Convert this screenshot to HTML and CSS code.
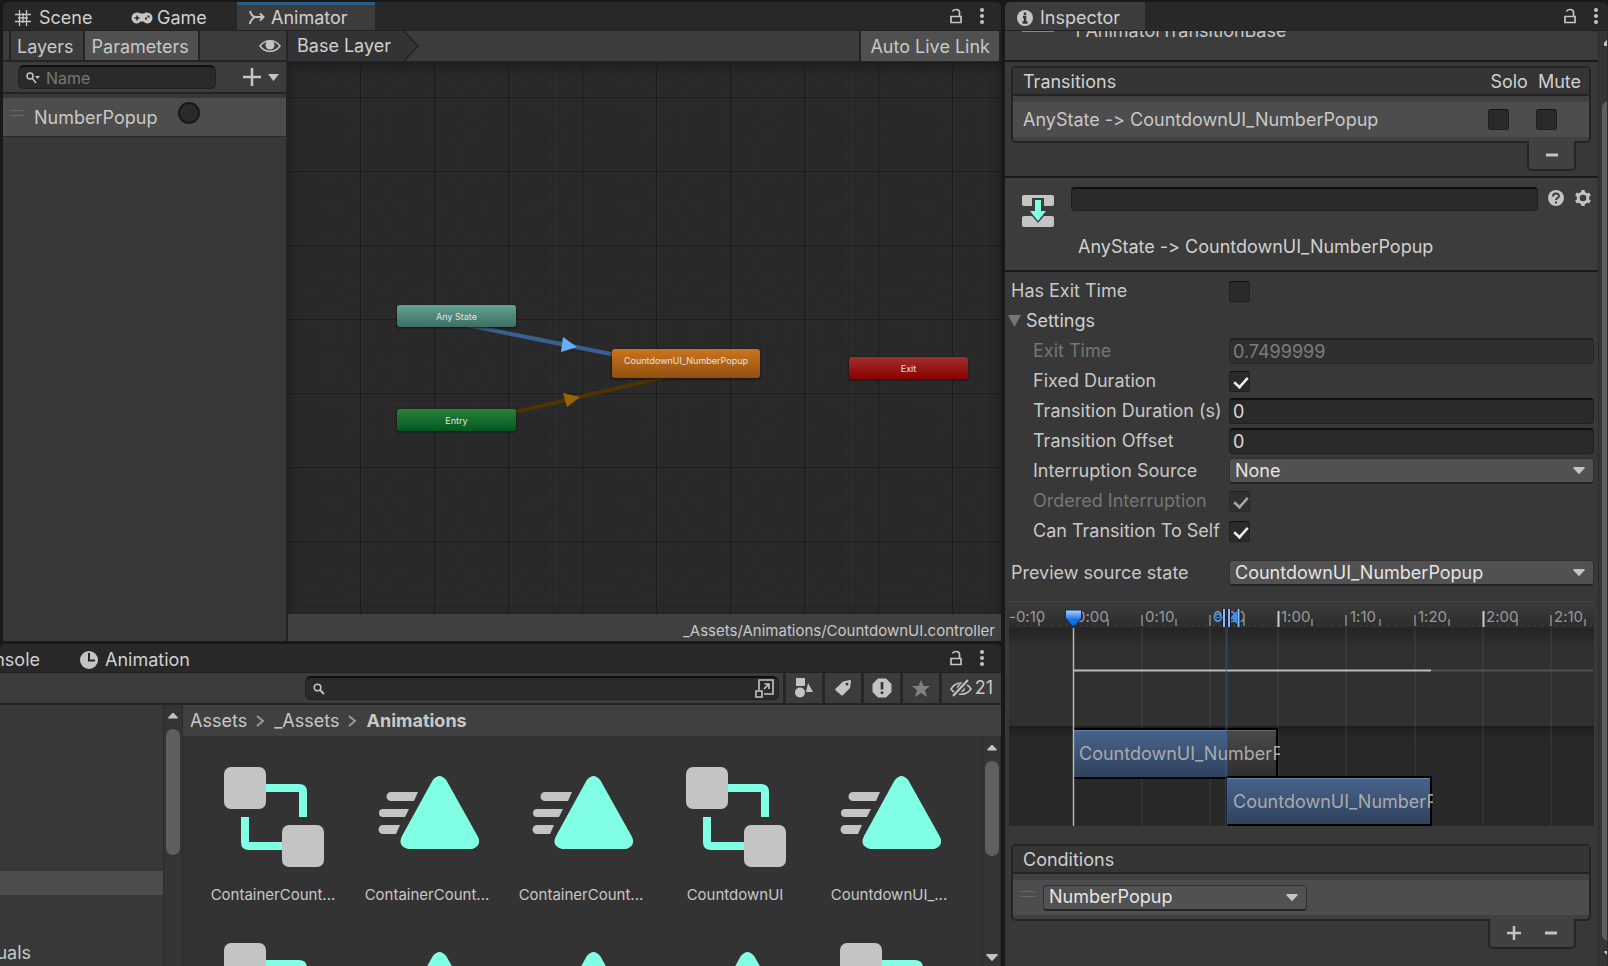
FILE: index.html
```html
<!DOCTYPE html>
<html lang="en">
<head>
<meta charset="utf-8">
<title>Animator</title>
<link rel="stylesheet" href="styles.css">
</head>
<body>
<svg class="defs" aria-hidden="true">
  <symbol id="lock" viewBox="0 0 14 16"><path d="M2 8.500h10v6H2zM3.500 3.500C4.500 1 10 .5 10.500 4v4.500" fill="none" stroke="currentColor" stroke-width="1.700"/></symbol>
  <symbol id="dots" viewBox="0 0 6 16"><circle cx="3" cy="2" r="2"/><circle cx="3" cy="8" r="2"/><circle cx="3" cy="14" r="2"/></symbol>
  <symbol id="caret" viewBox="0 0 12 7"><path d="M1 0h10a.8.8 0 0 1 .6 1.300L6.500 6.700a.7.7 0 0 1-1 0L.4 1.300A.8.8 0 0 1 1 0z"/></symbol>
  <symbol id="controller" viewBox="0 0 102 102"><path d="M42 21h33q4 0 4 4v25M21 50v25q0 4 4 4h33" fill="none" stroke="#80ffe4" stroke-width="8"/><rect width="42" height="42" rx="7"/><rect x="58" y="58" width="42" height="42" rx="7"/></symbol>
  <symbol id="clip" viewBox="0 0 102 102"><path d="M13 25h27l-4 9H13a4.500 4.500 0 0 1 0-9zM5 42h26l-4 8H5a4 4 0 0 1 0-8zM5 58h17l-4 9H5a4.500 4.500 0 0 1 0-9z"/><path d="M54.500 13.500q7-9 14 0L99.500 69q5 9-5 13H30q-11-3-6-13z" fill="#80ffe4"/></symbol>
</svg>
<div class="editor">
  <main class="left">
    <section class="animator panel">
      <nav class="tabs">
        <button class="tab scene"><svg width="16" height="16" viewBox="0 0 16 16"><path d="M4.500 0v16M11.500 0v16M0 4.500h16M0 11.500h16M8 3v10M3 8h10" fill="none" stroke="currentColor" stroke-width="1.300"/></svg>Scene</button>
        <button class="tab game"><svg width="22" height="12" viewBox="0 0 22 12"><path d="M6 .5q2 0 3 1h4q1-1 3-1a5.500 5.500 0 0 1 0 11q-2 0-3.500-2h-3Q8 11.500 6 11.500a5.500 5.500 0 0 1 0-11z"/><path d="M6 3.500v5M3.500 6h5" stroke="#282828" stroke-width="1.500"/><path d="M14 5.500h2v2h-2zM16.500 3.500h2v2h-2z" fill="#282828"/></svg>Game</button>
        <button class="tab animator-tab active"><svg width="16" height="16" viewBox="0 0 16 16"><path d="M1 1c1 4 3 6 6 6h7M1 14c0-3 2-5 5-7M11 3.500 14.500 7 11 10.500" fill="none" stroke="currentColor" stroke-width="2"/></svg>Animator</button>
        <span class="tab-tools"><button aria-label="Lock"><svg width="14" height="16"><use href="#lock"/></svg></button><button aria-label="Menu"><svg width="6" height="16"><use href="#dots"/></svg></button></span>
      </nav>
      <div class="animator-body">
        <aside class="params">
          <div class="param-tabs"><button>Layers</button><button class="on">Parameters</button><button class="eye" aria-label="Toggle panel"><svg width="22" height="14" viewBox="0 0 22 14"><path d="M1 7c5-7 15-7 20 0-5 7-15 7-20 0z" fill="none" stroke="currentColor" stroke-width="1.500"/><circle cx="11" cy="6" r="4.500"/></svg></button></div>
          <div class="param-search">
            <label class="search-box"><svg width="14" height="12" viewBox="0 0 14 12"><circle cx="4" cy="4" r="3" fill="none" stroke="currentColor" stroke-width="1.500"/><path d="m6 6 4 5" stroke="currentColor" stroke-width="1.500"/><path d="M9 4h5l-2.500 3z"/></svg><input type="search" placeholder="Name" aria-label="Search parameters"></label>
            <button class="add" aria-label="Add parameter"><svg width="36" height="18" viewBox="0 0 36 18"><path d="M9 0v18M0 9h18" stroke="currentColor" stroke-width="2.500"/><path d="M25 6h11l-5.500 7z"/></svg></button>
          </div>
          <div class="param-row"><i class="grip"></i><label for="trigger">NumberPopup</label><input id="trigger" type="radio"></div>
        </aside>
        <div class="graph">
          <div class="crumbs"><button class="layer">Base Layer<svg width="17" height="30" viewBox="0 0 17 30"><path d="M0 0h1l14 15L1 30H0z" fill="#333"/><path d="M1 0 15 15 1 30" fill="none" stroke="#222" stroke-width="1.500"/></svg></button><button class="live">Auto Live Link</button></div>
          <div class="canvas">
            <svg class="links">
              <defs><pattern id="grid" x="72" y="35" width="74" height="74" patternUnits="userSpaceOnUse"><path d="M7.400 0v74M14.800 0v74M22.200 0v74M29.600 0v74M37 0v74M44.400 0v74M51.800 0v74M59.200 0v74M66.600 0v74M0 7.400h74M0 14.800h74M0 22.200h74M0 29.600h74M0 37h74M0 44.400h74M0 51.800h74M0 59.200h74M0 66.600h74" stroke="#262626"/><path d="M.5 0v74M0 .5h74" stroke="#1d1d1d"/></pattern></defs>
              <rect width="100%" height="100%" fill="url(#grid)"/>
              <path d="M168 261 398 307" stroke="#3a608e" stroke-width="4"/><path d="M168 364 398 310" stroke="#4f3300" stroke-width="4"/>
              <path d="m275 275 14 10-16 5z" fill="#65afff"/><path d="m275 331 17 4-13 10z" fill="#9b6400"/>
            </svg>
            <div class="node any">Any State</div><div class="node state">CountdownUI_NumberPopup</div><div class="node entry">Entry</div><div class="node exit">Exit</div>
          </div>
          <footer class="path">_Assets/Animations/CountdownUI.controller</footer>
        </div>
      </div>
    </section>
    <section class="project panel">
      <nav class="tabs">
        <button class="tab console">Console</button>
        <button class="tab animation"><svg width="18" height="18" viewBox="0 0 18 18"><circle cx="9" cy="9" r="9"/><path d="M9 2v7.500h6" fill="none" stroke="#282828" stroke-width="2"/></svg>Animation</button>
        <span class="tab-tools"><button aria-label="Lock"><svg width="14" height="16"><use href="#lock"/></svg></button><button aria-label="Menu"><svg width="6" height="16"><use href="#dots"/></svg></button></span>
      </nav>
      <div class="project-tools">
        <label class="search-box"><svg width="12" height="12" viewBox="0 0 12 12"><circle cx="4.500" cy="4.500" r="3.300" fill="none" stroke="currentColor" stroke-width="1.600"/><path d="m7 7 4 4" stroke="currentColor" stroke-width="2"/></svg><input type="search" aria-label="Search assets"><svg class="expand" width="20" height="20" viewBox="0 0 20 20"><path d="M4 11V1h14v14h-9M1 12h6v6H1zM9 10l5-5M9.500 5H14v5" fill="none" stroke="currentColor" stroke-width="1.600"/></svg></label>
        <button aria-label="Search by type"><svg width="18" height="20" viewBox="0 0 18 20"><path d="M1 0h9v8H1zM13 5l5 9h-7z"/><circle cx="5" cy="14.500" r="5"/></svg></button>
        <button aria-label="Search by label"><svg width="16" height="16" viewBox="0 0 16 16"><path d="M8 1.500 15 0q1 0 1 1l-1 7-7 7q-1 1-2 0L.7 10.500q-1-1 0-2z"/><circle cx="12" cy="4" r="1.500" fill="#3c3c3c"/></svg></button>
        <button aria-label="Search by import log"><svg width="20" height="20" viewBox="0 0 20 20"><path d="M6 .5h8L19.500 6v8L14 19.500H6L.5 14V6z"/><path d="M10 4v7.500M10 13.500v2.500" stroke="#333" stroke-width="2.600"/></svg></button>
        <button class="star" aria-label="Favorites"><svg width="18" height="17" viewBox="0 0 18 17"><path d="m9 0 2.500 6H18l-5 4 2 7-6-4-6 4 2-7-5-4h6.500z"/></svg></button>
        <button class="hidden-count"><svg width="22" height="18" viewBox="0 0 22 18"><path d="M1 10c5-8 15-8 20 0-5 7-15 7-20 0z" fill="none" stroke="currentColor" stroke-width="1.600"/><circle cx="11" cy="9" r="4"/><path d="M4 17 18 1" stroke="#3c3c3c" stroke-width="5"/><path d="M3 17 18 1" stroke="currentColor" stroke-width="2"/></svg>21</button>
      </div>
      <div class="project-body">
        <aside class="tree"><div class="tree-selected"></div><div class="tree-item">Visuals</div></aside>
        <div class="scroll tree-scroll"><svg width="10" height="7"><use class="up" href="#caret"/></svg><i></i></div>
        <div class="browser">
          <nav class="breadcrumb"><a href="#">Assets</a><svg width="9" height="12" viewBox="0 0 9 12"><path d="m1 1 6 5-6 5" fill="none" stroke="#999" stroke-width="2"/></svg><a href="#">_Assets</a><svg width="9" height="12" viewBox="0 0 9 12"><path d="m1 1 6 5-6 5" fill="none" stroke="#999" stroke-width="2"/></svg><a href="#"><b>Animations</b></a></nav>
          <div class="asset-area">
            <div class="assets">
              <figure><svg><use href="#controller"/></svg><figcaption>ContainerCount...</figcaption></figure>
              <figure><svg><use href="#clip"/></svg><figcaption>ContainerCount...</figcaption></figure>
              <figure><svg><use href="#clip"/></svg><figcaption>ContainerCount...</figcaption></figure>
              <figure><svg><use href="#controller"/></svg><figcaption>CountdownUI</figcaption></figure>
              <figure><svg><use href="#clip"/></svg><figcaption>CountdownUI_...</figcaption></figure>
              <figure><svg><use href="#controller"/></svg></figure>
              <figure><svg><use href="#clip"/></svg></figure>
              <figure><svg><use href="#clip"/></svg></figure>
              <figure><svg><use href="#clip"/></svg></figure>
              <figure><svg><use href="#controller"/></svg></figure>
            </div>
            <div class="scroll asset-scroll"><svg width="10" height="7"><use class="up" href="#caret"/></svg><i></i><svg class="down" width="12" height="7"><use href="#caret"/></svg></div>
          </div>
        </div>
      </div>
    </section>
  </main>
  <aside class="inspector panel">
    <nav class="tabs">
      <button class="tab inspector-tab active"><svg width="16" height="16" viewBox="0 0 16 16"><circle cx="8" cy="8" r="8"/><path d="M8 2.500v2.500M6 7h2v5.500M5.500 12.500h5" fill="none" stroke="#333" stroke-width="2.400"/></svg>Inspector</button>
      <span class="tab-tools"><button aria-label="Lock"><svg width="14" height="16"><use href="#lock"/></svg></button><button aria-label="Menu"><svg width="6" height="16"><use href="#dots"/></svg></button></span>
    </nav>
    <div class="inspector-body">
      <div class="details">
        <div class="summary"><i></i><span>1 AnimatorTransitionBase</span></div>
        <section class="list-wrap">
          <div class="list"><header><span>Transitions</span><span class="solo">Solo</span><span class="mute">Mute</span></header>
            <div class="row"><span>AnyState -&gt; CountdownUI_NumberPopup</span><input class="solo-check" type="checkbox" aria-label="Solo"><input class="mute-check" type="checkbox" aria-label="Mute"></div></div>
          <div class="list-foot one"><button aria-label="Remove transition"><svg width="14" height="14"><path d="M1 7h12" stroke="currentColor" stroke-width="3"/></svg></button></div>
        </section>
        <section class="title">
          <svg width="32" height="32" viewBox="0 0 32 32"><rect width="32" height="11" rx="2"/><rect y="21" width="32" height="11" rx="2"/><path d="M10 3h12v12h5L16 28 5 15h5z" fill="#3c3c3c"/><path d="M13 5h6v11h5l-8 10-8-10h5z" fill="#80ffe4"/></svg>
          <input type="text" aria-label="Transition name">
          <span class="help"><svg width="16" height="16" viewBox="0 0 16 16"><circle cx="8" cy="8" r="8"/><path d="M5 6.500c0-4 6-4 6-.5 0 2-3 2-3 4M8 11.500v2" fill="none" stroke="#3c3c3c" stroke-width="2"/></svg><svg width="16" height="16" viewBox="0 0 16 16"><circle cx="8" cy="8" r="4.800" fill="none" stroke="currentColor" stroke-width="3"/><path d="M8 0v3M8 13v3M1 4l2.700 1.500M12.300 10.500 15 12M1 12l2.700-1.500M12.300 5.500 15 4" stroke="currentColor" stroke-width="3.500"/></svg></span>
          <h1>AnyState -&gt; CountdownUI_NumberPopup</h1>
        </section>
        <form class="fields">
          <div class="field"><label for="exit">Has Exit Time</label><input id="exit" type="checkbox"></div>
          <div class="field settings"><svg width="13" height="12"><path d="M0 0h13L6.500 12z" fill="#757575"/></svg><span>Settings</span></div>
          <div class="field sub off"><label for="time">Exit Time</label><input id="time" type="text" value="0.7499999" disabled></div>
          <div class="field sub"><label for="fixed">Fixed Duration</label><input id="fixed" type="checkbox" checked></div>
          <div class="field sub"><label for="duration">Transition Duration (s)</label><input id="duration" type="text" value="0"></div>
          <div class="field sub"><label for="offset">Transition Offset</label><input id="offset" type="text" value="0"></div>
          <div class="field sub"><label for="source">Interruption Source</label><span class="select"><select id="source"><option>None</option></select><svg width="12" height="7"><use href="#caret"/></svg></span></div>
          <div class="field sub off"><label for="ordered">Ordered Interruption</label><input id="ordered" type="checkbox" checked disabled></div>
          <div class="field sub"><label for="self">Can Transition To Self</label><input id="self" type="checkbox" checked></div>
          <div class="field preview"><label for="preview">Preview source state</label><span class="select"><select id="preview"><option>CountdownUI_NumberPopup</option></select><svg width="12" height="7"><use href="#caret"/></svg></span></div>
        </form>
        <svg class="timeline" height="225">
          <defs>
            <linearGradient id="ruler" x2="0" y2="1"><stop stop-color="#3d3d3d"/><stop offset="1" stop-color="#2b2b2b"/></linearGradient>
            <linearGradient id="shade" x2="0" y2="1"><stop stop-color="#242424"/><stop offset="1" stop-color="#303030"/></linearGradient>
            <linearGradient id="shade2" x2="0" y2="1"><stop stop-color="#1d1d1d"/><stop offset="1" stop-color="#282828"/></linearGradient>
            <linearGradient id="blue" x2="0" y2="1"><stop stop-color="#48648d"/><stop offset="1" stop-color="#2f425d"/></linearGradient>
            <linearGradient id="gray" x2="0" y2="1"><stop stop-color="#4a4a4a"/><stop offset="1" stop-color="#2d2d2d"/></linearGradient>
            <linearGradient id="pin" x2="0" y2="1"><stop stop-color="#b5d5f8"/><stop offset=".6" stop-color="#1473e8"/><stop offset="1" stop-color="#0766dc"/></linearGradient>
            <clipPath id="c1"><path d="M64 128h207v50H64z"/></clipPath><clipPath id="c2"><path d="M218 176h206v49H218z"/></clipPath>
          </defs>
          <rect width="100%" height="27" fill="url(#ruler)"/><rect y="27" width="100%" height="98" fill="#303030"/><rect y="27" width="100%" height="20" fill="url(#shade)"/>
          <rect y="125" width="100%" height="100" fill="#282828"/><rect y="125" width="100%" height="12" fill="url(#shade2)"/><path d="M0 .5h584" stroke="#454545"/>
          <path d="M133 27v198M201 27v198M269 27v198M337 27v198M406 27v198M474 27v198M542 27v198" stroke="#fff" stroke-opacity=".1" stroke-width="1"/>
          <path d="M8 24.500h576" stroke="#555" stroke-dasharray="1 6"/>
          <path d="M133 14v11M201 14v11M337 14v11M406 14v11M542 14v11M30 18v7M99 18v7M167 18v7M235 18v7M303 18v7M371 18v7M440 18v7M508 18v7M576 18v7" stroke="#8a8a8a" stroke-width="1.500"/><path d="M269.500 10v16M474.500 10v16" stroke="#ccc" stroke-width="2"/>
          <g class="times"><text x="0" y="21">-0:10</text><text x="67" y="21">0:00</text><text x="136" y="21">0:10</text><text x="204" y="21">0:20</text><text x="272" y="21">1:00</text><text x="341" y="21">1:10</text><text x="409" y="21">1:20</text><text x="477" y="21">2:00</text><text x="545" y="21">2:10</text></g>
          <path d="M65 69.500h357" stroke="#bbb" stroke-width="2"/><path d="M422 69.500h162" stroke="#505050" stroke-width="2"/>
          <rect x="64" y="127" width="205" height="51" fill="#000"/><rect x="65" y="129" width="153" height="47" fill="url(#blue)"/><rect x="218" y="129" width="49" height="47" fill="url(#gray)"/>
          <rect x="217" y="175" width="206" height="50" fill="#000"/><rect x="218" y="177" width="203" height="46" fill="url(#blue)"/>
          <path d="M65 129.500h153M218 177.500h203" stroke="#6580a5"/><path d="M218 129.500h49" stroke="#686868"/>
          <path d="M217.500 26v199" stroke="#3b5f9b" stroke-opacity=".4" stroke-width="2.500"/><path d="M64.500 27v198" stroke="#b5b5b5" stroke-width="1.500"/>
          <g class="clip-names"><text x="70" y="159" clip-path="url(#c1)">CountdownUI_NumberPopup</text><text x="224" y="207" clip-path="url(#c2)">CountdownUI_NumberPopup</text></g>
          <path d="M56.500 9h16v8L66 25h-3l-6.500-8z" fill="url(#pin)" stroke="#102b50"/>
          <path d="M215 8v18M220 8v18M229.500 8v18" stroke="#0b1830" stroke-width="4"/><path d="M215 8v18M220 8v18M229.500 8v18" stroke="#8cbcf8" stroke-width="2"/><path d="M228 10v13l-6-6.500z" fill="#398ff5"/><path d="m205 16.500 4-4 4 4-4 4zM207 16.500h4" fill="#101820" stroke="#398ff5" stroke-width="1.500"/>
        </svg>
        <section class="list-wrap conditions">
          <div class="list"><header><span>Conditions</span></header><div class="row"><i class="grip"></i><span class="select"><select aria-label="Condition parameter"><option>NumberPopup</option></select><svg width="12" height="7"><use href="#caret"/></svg></span></div></div>
          <div class="list-foot"><button aria-label="Add condition"><svg width="14" height="14"><path d="M0 7h14M7 0v14" stroke="currentColor" stroke-width="2.500"/></svg></button><button aria-label="Remove condition"><svg width="14" height="14"><path d="M1 7h12" stroke="currentColor" stroke-width="3"/></svg></button></div>
        </section>
      </div>
      <div class="scroll inspector-scroll"><svg width="12" height="7"><use class="up" href="#caret"/></svg><i></i><svg class="down" width="12" height="7"><use href="#caret"/></svg></div>
    </div>
  </aside>
</div>
</body>
</html>
```
FILE: styles.css
```css
* { box-sizing: border-box; }
body { margin: 0; background: #191919; color: #c8c8c8; font: 18px/22px Inter, sans-serif; font-variant-ligatures: none; overflow: hidden; }
button, input, select { font: inherit; font-variant-ligatures: none; color: inherit; border: 0; padding: 0; margin: 0; background: none; outline: 0; }
svg { display: block; flex: none; fill: currentColor; color: #c4c4c4; }
figure, h1 { margin: 0; }
.defs { position: absolute; width: 0; height: 0; }
a { color: inherit; text-decoration: none; }
.up { transform: rotate(180deg); transform-origin: 5px 3px; }

.editor { display: grid; grid-template-columns: minmax(0, 1003fr) minmax(0, 603fr); grid-template-rows: minmax(0, 1fr); gap: 2px; height: 100vh; padding-top: 2px; }
.left { display: grid; grid-template-rows: minmax(0, 639fr) minmax(0, 322fr); gap: 3px; min-width: 0; min-height: 0; }
.panel { display: flex; flex-direction: column; min-width: 0; min-height: 0; overflow: hidden; }
.tabs { display: flex; flex: none; height: 29px; background: #282828; border-bottom: 1px solid #222; border-radius: 5px 5px 0 0; overflow: hidden; }
.tab { display: flex; align-items: center; gap: 8px; height: 29px; padding: 2px 12px 0; white-space: nowrap; color: #d0d0d0; }
.tab.active { background: #3c3c3c; }
.scene { width: 116px; }
.game { width: 118px; gap: 4px; }
.animator-tab { width: 138px; border-top: 3px solid #2c5d87; padding-top: 0; gap: 6px; }
.tab-tools { display: flex; align-items: center; gap: 16px; margin-left: auto; padding-right: 16px; }
.tab-tools button { display: block; }

.animator { margin-left: 3px; }
.animator .tabs, .project .tabs { margin-right: 2px; }
.animator-body { display: flex; flex: 1; min-height: 0; }
.params { flex: none; width: 285px; background: #383838; border-right: 2px solid #242424; }
.param-tabs { display: flex; height: 31px; background: #3c3c3c; border-bottom: 2px solid #242424; padding-left: 6px; }
.param-tabs button { border: solid #242424; border-width: 0 0 0 2px; padding: 2px 9px 0 6px; }
.param-tabs .on { background: #505050; border-width: 0 2px; padding: 2px 9px 0 7px; }
.param-tabs .eye { border: 0; margin-left: auto; padding: 0; }
.eye svg { margin-right: 5px; }
.param-search { display: flex; align-items: center; height: 32px; padding: 0 7px 0 15px; background: #3c3c3c; border-bottom: 2px solid #242424; }
.search-box { display: flex; align-items: center; height: 24px; background: #2a2a2a; border: 1px solid #202020; border-top: 2px solid #0f0f0f; border-radius: 6px; padding: 0 7px; }
.param-search .search-box { width: 198px; gap: 6px; font-size: 16px; line-height: 20px; }
.search-box input { min-width: 0; flex: 1; appearance: none; }
.search-box input::placeholder { color: #787878; opacity: 1; }
.add { margin-left: auto; }
.param-row { display: flex; align-items: center; height: 39px; margin-top: 4px; padding-left: 7px; background: #4d4d4d; border-bottom: 1px solid #282828; }
.param-row label { padding: 2px 21px 0 9px; }
.param-row input { appearance: none; width: 22px; height: 22px; border: 2px solid #181818; border-radius: 50%; background: #2a2a2a; margin-bottom: 8px; }
.grip { width: 15px; height: 6px; border: solid #666; border-width: 1px 0; margin-bottom: 8px; flex: none; }
.graph { display: flex; flex: 1; flex-direction: column; min-width: 0; background: #3c3c3c; margin-right: 2px; }
.crumbs { display: flex; flex: none; justify-content: space-between; height: 31px; border-bottom: 1px solid #242424; }
.layer { display: flex; align-items: center; background: #333; padding-left: 9px; color: #d0d0d0; }
.layer svg { background: #3c3c3c; margin-left: 12px; }
.live { background: #505050; border: solid #242424; border-width: 0 2px; padding: 2px 9px 0; }
.canvas { position: relative; flex: 1; min-height: 0; overflow: hidden; background: #2a2a2a; }
.canvas::after { content: ""; position: absolute; inset: 0; box-shadow: inset 0 4px 12px #1c1c1c; }
.links { position: absolute; left: 0; top: 0; width: 100%; height: 100%; }
.node { position: absolute; width: 119px; height: 22px; border-radius: 3px; box-shadow: 0 1px 3px #111; color: #e4e4e4; font-size: 9px; line-height: 23px; text-align: center; }
.any { left: 109px; top: 243px; background: linear-gradient(#62a394, #3d6c62); }
.entry { left: 109px; top: 347px; background: linear-gradient(#28803a, #035a21); }
.state { left: 324px; top: 287px; width: 148px; height: 29px; background: linear-gradient(#cc741f, #91500e); }
.exit { left: 561px; top: 295px; background: linear-gradient(#a12e2e, #8b0000); }
.path { flex: none; height: 27px; padding: 7px 6px 0; background: #404040; font-size: 15px; line-height: 20px; text-align: right; }

.console { justify-content: flex-end; width: 52px; margin-left: 0; }
.animation { padding-left: 28px; gap: 7px; }
.project-tools { display: flex; flex: none; align-items: center; height: 32px; margin-right: 2px; background: #3c3c3c; border-bottom: 2px solid #242424; }
.project-tools .search-box { flex: 1; margin: 0 4px 0 305px; padding-right: 3px; }
.project-tools button { display: flex; align-items: center; justify-content: center; gap: 3px; width: 39px; height: 30px; border-left: 3px solid #262626; }
.project-tools .star svg { color: #808080; }
.project-tools .hidden-count { width: 62px; }
.project-body { display: flex; flex: 1; min-height: 0; margin-right: 2px; }
.tree { width: 163px; flex: none; padding-top: 166px; background: #383838; overflow: hidden; }
.tree-selected { height: 24px; background: #4d4d4d; }
.tree-item { display: flex; justify-content: flex-end; width: 31px; margin-top: 47px; white-space: nowrap; }
.scroll { display: flex; flex: none; flex-direction: column; align-items: center; width: 19px; background: #353535; border: solid #2b2b2b; border-width: 0 1px; }
.scroll i { width: 14px; border-radius: 7px; background: #5f5f5f; }
.tree-scroll { padding-top: 8px; width: 20px; }
.tree-scroll i { height: 126px; margin-top: 9px; }
.browser { display: flex; flex: 1; flex-direction: column; min-width: 0; background: #333; }
.breadcrumb { display: flex; flex: none; align-items: center; gap: 9px; height: 31px; background: #404040; padding-left: 7px; }
.asset-area { display: flex; flex: 1; min-height: 0; }
.assets { display: grid; grid-template-columns: repeat(5, 154px); grid-auto-rows: 176px; flex: 1; padding: 31px 0 0 13px; overflow: hidden; }
.assets figure { text-align: center; }
.assets figure svg { width: 102px; height: 102px; margin: 0 28px; }
.assets figcaption { margin-top: 16px; font-size: 15px; line-height: 20px; }
.asset-scroll { padding: 9px 0 5px; }
.asset-scroll i { height: 95px; margin-top: 9px; }
.down { margin-top: auto; }

.inspector-tab { width: 140px; gap: 7px; }
.inspector .tab-tools { padding-right: 9px; }
.inspector-body { display: flex; flex: 1; min-height: 0; background: #383838; }
.details { flex: 1; min-width: 0; overflow: hidden; }
.inspector-scroll { width: 10px; padding: 9px 0 8px; align-items: flex-start; overflow: hidden; }
.inspector-scroll i { height: 840px; margin: 54px 0 0 3px; flex: none; }
.inspector-scroll svg { margin-left: 5px; }
.summary { display: flex; height: 31px; border-bottom: 2px solid #1a1a1a; background: #3c3c3c; padding-left: 17px; overflow: hidden; }
.summary i { width: 32px; height: 1px; background: #888; }
.summary span { margin: -11px 0 0 19px; }
.list-wrap { padding: 4px 7px 5px 6px; border-bottom: 2px solid #1a1a1a; }
.list { border: 2px solid #242424; border-radius: 5px; background: #414141; padding-bottom: 4px; }
.list header { display: flex; height: 28px; align-items: center; padding: 2px 8px 0 10px; background: #353535; border-bottom: 2px solid #242424; margin-bottom: 6px; color: #d0d0d0; }
.solo { margin-left: auto; margin-right: 10px; }
.row { display: flex; align-items: center; height: 35px; padding: 0 32px 0 10px; background: #4d4d4d; }
.solo-check { margin-left: auto; margin-right: 27px; }
input[type=checkbox] { appearance: none; position: relative; flex: none; width: 21px; height: 21px; border: 1px solid #202020; border-top-color: #111; border-radius: 3px; background: #2a2a2a; }
input[type=checkbox]:checked::after { content: ""; position: absolute; left: 3px; top: 4px; width: 13px; height: 7px; border: solid #eee; border-width: 0 0 3px 3px; transform: rotate(-48deg) scale(.85); }
.list-foot { display: flex; justify-content: space-around; align-items: center; width: 88px; height: 30px; margin: -2px 15px 0 auto; padding: 0 5px; background: #414141; border: 2px solid #242424; border-top: 0; border-radius: 0 0 5px 5px; position: relative; }
.list-foot.one { width: 49px; }
.title { display: grid; grid-template-columns: 32px minmax(0, 1fr) 43px; grid-template-rows: 49px 22px; column-gap: 17px; align-items: start; height: 94px; padding: 9px 7px 0 17px; background: #3c3c3c; border-bottom: 2px solid #1a1a1a; }
.title > svg { margin-top: 8px; }
.title input, .field input[type=text] { height: 24px; background: #2a2a2a; border: 1px solid #202020; border-top: 2px solid #0f0f0f; border-radius: 4px; }
.title input { width: 100%; }
.title { column-gap: 0; grid-template-columns: 49px minmax(0, 1fr) 53px; }
.help { display: flex; justify-content: flex-end; gap: 11px; margin-top: 3px; }
.title h1 { grid-column: 2 / 4; font-size: 18px; font-weight: 400; line-height: 22px; padding-left: 7px; color: #d0d0d0; }
.fields { padding: 4px 0 0 6px; }
.field { display: grid; grid-template-columns: 215px minmax(0, 1fr); align-items: center; column-gap: 3px; height: 30px; padding-right: 4px; }
.field label { white-space: nowrap; overflow: hidden; }
.sub label { padding-left: 22px; }
.off { color: #767676; }
.off input { opacity: .6; }
.field .select, .field input[type=text] { width: 100%; }
.field input[type=text] { height: 26px; padding-left: 3px; color: #ddd; }
.off input[type=text]:disabled { color: #aaa; opacity: .6; }
.settings { display: flex; margin-left: -3px; gap: 5px; color: #d0d0d0; }
.select { position: relative; display: block; }
.select select { display: block; appearance: none; width: 100%; height: 26px; padding: 0 24px 0 5px; border: 1px solid #303030; border-bottom: 2px solid #242424; border-radius: 4px; background: #515151; color: #e4e4e4; }
.select svg { position: absolute; right: 9px; top: 9px; pointer-events: none; }
.preview { margin-top: 12px; }
.timeline { display: block; width: calc(100% - 8px); margin: 13px 0 0 4px; }
.times { font-size: 15px; fill: #999; }
.clip-names { font-size: 18px; fill: #aaa; }
.conditions { border: 0; padding-top: 18px; }
.conditions .row { padding-left: 7px; }
.conditions .select { width: 264px; margin-left: 8px; }
```
